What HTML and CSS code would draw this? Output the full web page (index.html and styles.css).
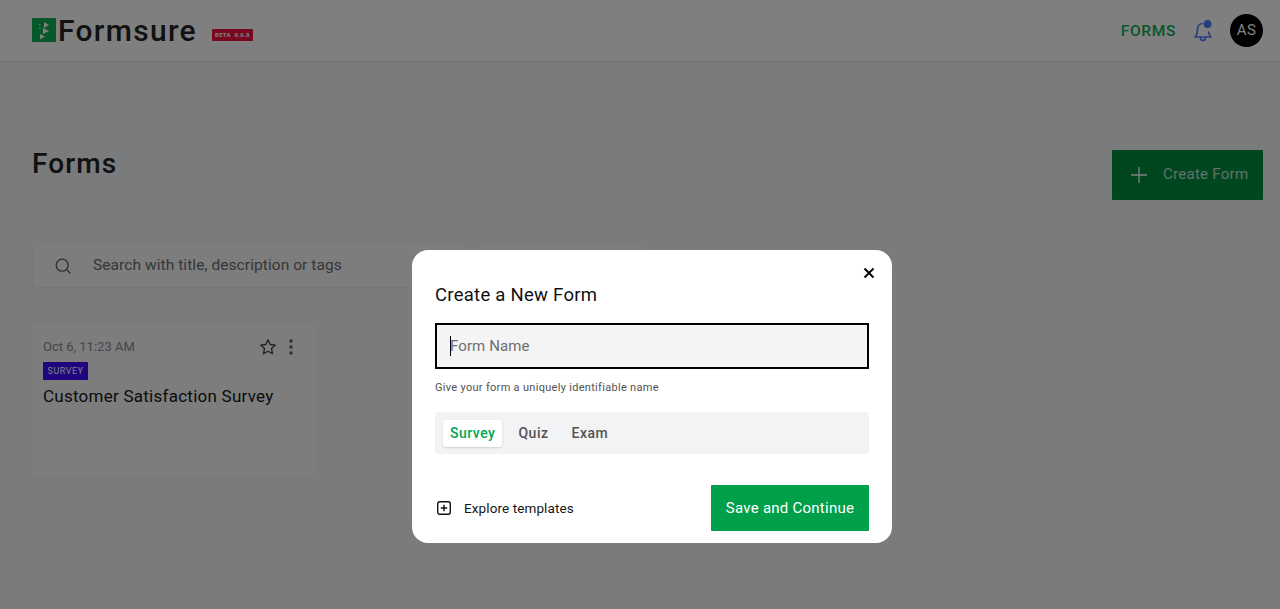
FILE: index.html
```html
<!DOCTYPE html>
<html lang="en">
<head>
<meta charset="utf-8">
<title>Formsure</title>
<link rel="stylesheet" href="styles.css">
</head>
<body>
<div class="app">
  <header class="topbar">
    <div class="brand">
      <svg class="logo" viewBox="0 0 24 24" width="24" height="24"><rect width="24" height="24" rx="1" fill="#0fb050"/><path d="M12 4l5 3-5 3zM11 10l6 3-6 3zM8 16l5 2.500-5 3z" fill="#fff"/><path d="M7 6h1.500v1.500H7zM7 9.500h1.500V11H7z" fill="#fff" opacity=".6"/></svg>
      <span class="brand-name">Formsure</span>
      <span class="beta">BETA&nbsp; 0.6.8</span>
    </div>
    <nav class="nav">
      <a class="nav-link">FORMS</a>
      <svg class="bell" viewBox="0 0 24 24" width="24" height="24" fill="none" stroke="#4a80ff" stroke-width="1.700" stroke-linecap="round" stroke-linejoin="round"><path d="M11 4.500C8 5 6.500 7.500 6.500 10.500c0 4-1 6-2.500 7.500h16c-1.200-1.200-2-2.500-2.300-5"/><path d="M9.500 18.500c0 1.800 1 3 2.500 3s2.500-1.200 2.500-3"/><circle cx="16.500" cy="5" r="4" fill="#4a80ff" stroke="none"/></svg>
      <span class="avatar">AS</span>
    </nav>
  </header>
  <main class="content">
    <div class="title-row">
      <h1 class="page-title">Forms</h1>
      <button class="create-btn">
        <svg viewBox="0 0 16 16" width="16" height="16" fill="none" stroke="#fff" stroke-width="1.300"><path d="M8 0v16M0 8h16"/></svg>
        <span>Create Form</span>
      </button>
    </div>
    <div class="filters">
      <div class="search">
        <svg viewBox="0 0 16 16" width="16" height="16" fill="none" stroke="#5c6066" stroke-width="1.300" stroke-linecap="round"><circle cx="7.200" cy="7.200" r="6"/><path d="M11.600 11.600l3.400 3.400"/></svg>
        <span>Search with title, description or tags</span>
      </div>
      <div class="filter-box"></div>
    </div>
    <article class="card">
      <div class="card-top">
        <span class="card-date">Oct 6, 11:23 AM</span>
        <div class="card-actions">
          <svg viewBox="0 0 18 18" width="18" height="18" fill="none" stroke="#3d4046" stroke-width="1.300" stroke-linejoin="round"><path d="M9 1.800l2.200 4.700 5.100.6-3.800 3.500 1 5.100L9 13.200l-4.500 2.500 1-5.100L1.700 7.100l5.100-.6z"/></svg>
          <svg viewBox="0 0 4 18" width="4" height="18" fill="#5c6066"><circle cx="2" cy="3" r="1.700"/><circle cx="2" cy="9" r="1.700"/><circle cx="2" cy="15" r="1.700"/></svg>
        </div>
      </div>
      <span class="tag">SURVEY</span>
      <h2 class="card-title">Customer Satisfaction Survey</h2>
    </article>
  </main>
</div>
<div class="overlay">
  <section class="modal">
    <button class="close" aria-label="Close">
      <svg viewBox="0 0 12 12" width="12" height="12" fill="none" stroke="#000" stroke-width="1.900"><path d="M1.500 1.500l9 9M10.500 1.500l-9 9"/></svg>
    </button>
    <h2 class="modal-title">Create a New Form</h2>
    <div class="field"><i class="caret"></i><span>Form Name</span></div>
    <p class="hint">Give your form a uniquely identifiable name</p>
    <div class="tabs">
      <span class="tab active">Survey</span>
      <span class="tab">Quiz</span>
      <span class="tab">Exam</span>
    </div>
    <div class="modal-foot">
      <a class="explore">
        <svg viewBox="0 0 16 16" width="16" height="16" fill="none" stroke="#111" stroke-width="1.400"><rect x="1.700" y="1.700" width="12.600" height="12.600" rx="2"/><path d="M8 4.800v6.400M4.800 8h6.400"/></svg>
        <span>Explore templates</span>
      </a>
      <button class="save">Save and Continue</button>
    </div>
  </section>
</div>
</body>
</html>
```
FILE: styles.css
```css
* { box-sizing: border-box; }
html, body { margin: 0; height: 609px; overflow: hidden; }
body { background: #f5f6f8; font-family: Roboto, "Noto Sans", sans-serif; color: #161616; }
button { font: inherit; border: 0; padding: 0; }
h1, h2, p { margin: 0; font-weight: 400; }

.topbar { height: 62px; background: #fff; border-bottom: 1px solid #e4e4e4; display: flex; align-items: center; justify-content: space-between; padding: 0 17px 0 32px; }
.brand { display: flex; align-items: center; }
.logo { display: block; margin-bottom: 1px; }
.brand-name { font-size: 30px; font-weight: 500; line-height: 36px; letter-spacing: 1.300px; margin-left: 2px; color: #222; }
.beta { margin-left: 15px; margin-top: 9px; background: #f0133f; color: #fff; font-size: 6px; font-weight: 700; letter-spacing: .3px; line-height: 12px; width: 41px; text-align: center; border-radius: 1px; }
.nav { display: flex; align-items: center; }
.nav-link { color: #0aad55; font-size: 15.500px; font-weight: 500; letter-spacing: .65px; }
.bell { margin-left: 15px; display: block; }
.avatar { margin-left: 15px; width: 33px; height: 33px; border-radius: 50%; background: #000; color: #fff; font-size: 15px; line-height: 33px; text-align: center; letter-spacing: .5px; }

.content { padding: 88px 17px 0 32px; }
.title-row { display: flex; justify-content: space-between; align-items: flex-start; }
.page-title { font-size: 28px; font-weight: 500; letter-spacing: 1.100px; line-height: 30px; margin-top: -1px; color: #222; }
.create-btn { width: 151px; height: 50px; background: #008f3e; color: #fff; display: flex; align-items: center; gap: 16px; padding-left: 19px; border-radius: 1px; font-size: 15px; letter-spacing: .27px; }
.create-btn span { opacity: .75; margin-top: -2px; }
.filters { display: flex; gap: 6px; margin-top: 43px; }
.search { width: 438px; height: 45px; background: #fbfbfc; border: 1px solid #eceef0; display: flex; align-items: center; gap: 22px; padding-left: 22px; font-size: 15.500px; letter-spacing: .07px; color: #6b6e73; }
.search span { margin-top: -2px; }
.filter-box { width: 171px; height: 45px; background: #fbfbfc; border: 1px solid #eceef0; }
.card { margin-top: 35px; width: 284px; height: 154px; background: #fbfbfb; padding: 14px 11px; }
.card-top { display: flex; justify-content: space-between; align-items: center; height: 20px; }
.card-date { font-size: 13px; color: #8a8d92; margin-top: -2px; }
.card-actions { display: flex; align-items: center; gap: 12px; padding-right: 12px; }
.card-actions svg { display: block; }
.tag { display: block; width: 45px; height: 18px; margin-top: 5px; background: #3f0bff; color: #fff; font-size: 9px; line-height: 18px; text-align: center; letter-spacing: .5px; border-radius: 1px; }
.card-title { font-size: 17px; line-height: 24px; margin-top: 4px; letter-spacing: .25px; }

.overlay { position: fixed; inset: 0; background: rgba(0,0,0,.5); display: flex; justify-content: center; align-items: flex-start; padding: 250px 0 0 24px; }
.modal { position: relative; width: 480px; height: 293px; background: #fff; border-radius: 16px; padding: 32px 23px 0; }
.close { position: absolute; top: 17px; right: 17px; background: none; width: 12px; height: 12px; display: block; }
.close svg { display: block; }
.modal-title { font-size: 18.500px; line-height: 26px; color: #111; letter-spacing: .27px; }
.field { margin-top: 15px; height: 46px; background: #f4f4f4; border: 2px solid #000; display: flex; align-items: center; padding-left: 13px; font-size: 15px; letter-spacing: .1px; color: #6f6f6f; }
.caret { width: 1px; height: 20px; background: #000; margin-right: -1px; }
.hint { margin-top: 12px; font-size: 11px; line-height: 14px; letter-spacing: .3px; color: #525252; }
.tabs { margin-top: 17px; height: 42px; background: #f2f3f5; border-radius: 3px; display: flex; align-items: center; padding-left: 8px; gap: 7px; }
.tab { padding: 0 8px; height: 27px; line-height: 27px; font-size: 14px; font-weight: 500; color: #525252; letter-spacing: .5px; }
.tab.active { padding: 0 7px; margin-right: 1px; background: #fff; color: #00a651; border-radius: 3px; box-shadow: 0 1px 2px rgba(0,0,0,.15); }
.modal-foot { margin-top: 31px; display: flex; justify-content: space-between; align-items: center; }
.explore { display: flex; align-items: center; gap: 12px; font-size: 13.500px; letter-spacing: .1px; color: #161616; padding-left: 1px; }
.explore svg { display: block; }
.save { width: 158px; height: 46px; background: #00a04a; color: #fff; font-size: 15px; letter-spacing: .25px; border-radius: 1px; }
```
